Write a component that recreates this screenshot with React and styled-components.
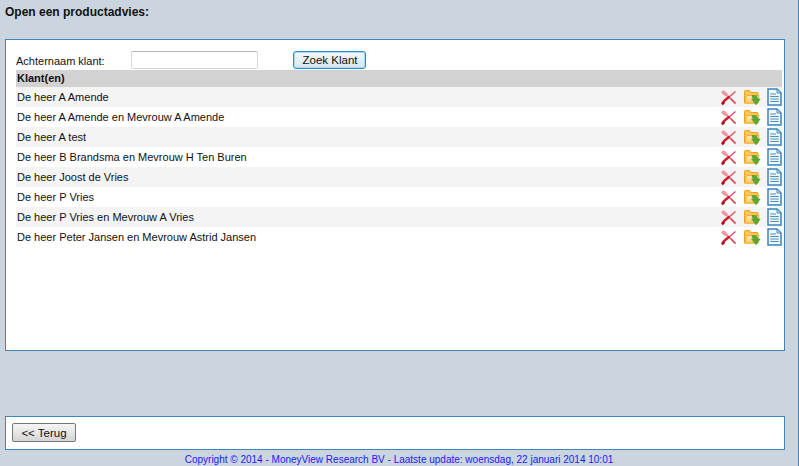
import React from 'react';
import styled, { createGlobalStyle } from 'styled-components';

const klanten = [
  'De heer A Amende',
  'De heer A Amende en Mevrouw A Amende',
  'De heer A test',
  'De heer B Brandsma en Mevrouw H Ten Buren',
  'De heer Joost de Vries',
  'De heer P Vries',
  'De heer P Vries en Mevrouw A Vries',
  'De heer Peter Jansen en Mevrouw Astrid Jansen',
];

const GlobalStyle = createGlobalStyle`
  html, body {
    margin: 0;
    padding: 0;
    height: 100%;
    overflow: hidden;
    background: #cbd5df;
    font-family: "Liberation Sans", Arial, sans-serif;
    font-size: 11px;
    color: #000;
  }
`;

const Page = styled.div`
  width: 799px;
  height: 466px;
  box-sizing: border-box;
  border-right: 1px solid #3f84bd;
  padding: 0 13px 0 5px;
  display: flex;
  flex-direction: column;
`;

const Title = styled.h1`
  margin: 0;
  height: 39px;
  padding-top: 5px;
  box-sizing: border-box;
  font-size: 12px;
  line-height: 14px;
  font-weight: bold;
  color: #111;
`;

const Panel = styled.div`
  box-sizing: border-box;
  background: #fff;
  border: 1px solid #3f84bd;
  height: ${(p) => p.$height}px;
  margin-top: ${(p) => p.$top || 0}px;
  padding: ${(p) => p.$padding};
`;

const SearchRow = styled.div`
  display: flex;
  align-items: center;
  height: 20px;
`;

const Label = styled.label`
  width: 115px;
  font-size: 11px;
  color: #111;
  position: relative;
  top: 1px;
`;

const SearchInput = styled.input`
  box-sizing: border-box;
  width: 127px;
  height: 18px;
  margin: 0 35px 0 0;
  padding: 0 2px;
  background: #fff;
  border: 1px solid #d3d8e2;
  border-top-color: #b5b5b5;
  border-radius: 2px;
  outline: none;
`;

const SearchButton = styled.button`
  box-sizing: border-box;
  width: 73px;
  height: 18px;
  padding: 0 0 0 1px;
  font-family: inherit;
  font-size: 11.5px;
  color: #111;
  border: 1px solid #2a8cc4;
  box-shadow: inset 0 0 0 1px #a5dcf3;
  border-radius: 3px;
  background: linear-gradient(#f4f9fc, #e6eef4 50%, #d6e4ec);
`;

const Table = styled.div`
  display: flex;
  flex-direction: column;
`;

const HeaderRow = styled.div`
  height: 17px;
  line-height: 16px;
  padding-left: 1px;
  background: #d2d2d2;
  font-weight: bold;
  font-size: 11px;
  color: #111;
`;

const Row = styled.div`
  display: flex;
  align-items: center;
  justify-content: space-between;
  height: 20px;
  padding-left: 1px;
  background: ${(p) => (p.$odd ? '#f4f4f4' : '#fff')};
  color: #111;
`;

const Icons = styled.div`
  display: flex;
  align-items: center;
  gap: 6px;
`;

const IconSvg = styled.svg`
  display: block;
  flex: none;
`;

const BackButton = styled.button`
  box-sizing: border-box;
  display: block;
  width: 64px;
  height: 19px;
  padding: 0;
  font-family: inherit;
  font-size: 11.5px;
  color: #111;
  border: 1px solid #777;
  border-radius: 2px;
  background: linear-gradient(#f6f6f6, #e6e6e6 50%, #d4d4d4);
`;

const Footer = styled.div`
  width: 780px;
  text-align: center;
  color: #1a1aff;
  font-size: 10px;
  line-height: 12px;
  margin-top: 4px;
  padding-left: 8px;
  box-sizing: border-box;
`;

const DeleteIcon = () => (
  <IconSvg width="17" height="17" viewBox="0 0 17 17">
    <path d="M3 3 L8 7.5 L11 10 L15.5 14.5" stroke="#ee9aa0" strokeWidth="1.8" fill="none" />
    <path d="M1.6 3 Q3 1.2 5 2.6 L7.5 5 L5.5 6.5 Q2.5 5.5 1.6 3 Z" fill="#f0a0a6" stroke="#e4707a" strokeWidth="0.6" />
    <path d="M10.5 9.5 L15.5 14.5" stroke="#dc4450" strokeWidth="1.2" fill="none" />
    <path d="M8.5 8.5 L15.5 2.5" stroke="#e0505e" strokeWidth="1.4" fill="none" />
    <path d="M2 15 L4 12 L9.5 7.5" stroke="#d4182a" strokeWidth="2.4" fill="none" />
    <path d="M2 15.5 L4.5 13" stroke="#a80f1c" strokeWidth="2.2" fill="none" />
  </IconSvg>
);

const FolderIcon = () => (
  <IconSvg width="18" height="17" viewBox="0 0 18 17">
    <defs>
      <linearGradient id="folderFront" x1="0" y1="0" x2="0" y2="1">
        <stop offset="0" stopColor="#fdeeb8" />
        <stop offset="1" stopColor="#fbc765" />
      </linearGradient>
    </defs>
    <path d="M1.5 14 V2.5 Q1.5 1.5 2.5 1.5 H6.5 L8 3.5 H14 Q15 3.5 15 4.5 V14 Z" fill="#fbc457" stroke="#ef9f1c" />
    <path d="M2 14 L3.5 6.5 H16 L14.5 14 Z" fill="url(#folderFront)" stroke="#f3ad2e" strokeWidth="0.9" />
    <path d="M9 6.5 H12.5 Q14 6.5 14.3 8.5 L14.6 10 H17.2 L13 15.8 L8.6 10 H11.2 Q11 8.8 9.5 9 Z" fill="#5aab30" stroke="#3f8a22" strokeWidth="0.5" />
  </IconSvg>
);

const DocIcon = () => (
  <IconSvg width="15" height="18" viewBox="0 0 15 18">
    <path d="M1 1 H10 L14 5 V17 H1 Z" fill="#f0f7fc" stroke="#3a85b8" strokeWidth="1.5" />
    <path d="M10 1 V5 H14 Z" fill="#c4dcec" stroke="#3a85b8" strokeWidth="0.9" />
    <path d="M3.2 6 H9 M3.2 8.5 H11.8 M3.2 11 H11.8 M3.2 13.5 H11.8" stroke="#4a90bf" strokeWidth="1.1" />
  </IconSvg>
);

const App = () => (
  <Page>
    <GlobalStyle />
    <Title>Open een productadvies:</Title>
    <Panel $height={312} $padding="10px 2px 0 10px">
      <SearchRow>
        <Label>Achternaam klant:</Label>
        <SearchInput type="text" />
        <SearchButton>Zoek Klant</SearchButton>
      </SearchRow>
      <Table>
        <HeaderRow>Klant(en)</HeaderRow>
        {klanten.map((naam, index) => (
          <Row key={naam + index} $odd={index % 2 === 0}>
            {naam}
            <Icons>
              <DeleteIcon />
              <FolderIcon />
              <DocIcon />
            </Icons>
          </Row>
        ))}
      </Table>
    </Panel>
    <Panel $height={34} $top={65} $padding="6px 0 0 6px">
      <BackButton>&lt;&lt; Terug</BackButton>
    </Panel>
    <Footer>Copyright © 2014 - MoneyView Research BV - Laatste update: woensdag, 22 januari 2014 10:01</Footer>
  </Page>
);

export default App;
